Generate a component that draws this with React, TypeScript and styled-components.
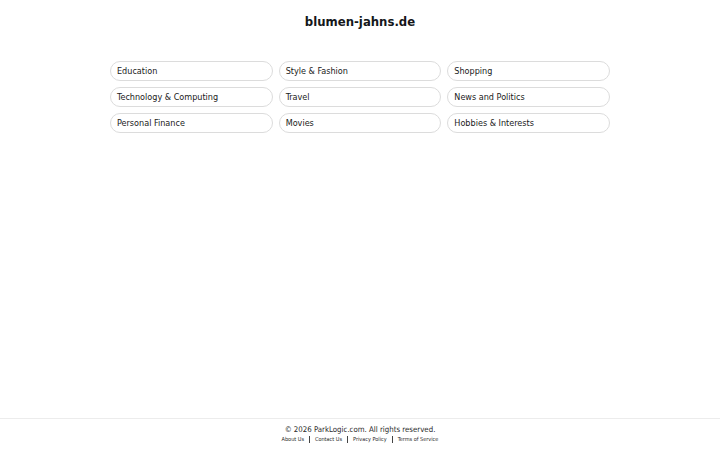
import React from 'react';
import styled, { createGlobalStyle } from 'styled-components';

const GlobalStyle = createGlobalStyle`
  html, body {
    margin: 0;
    padding: 0;
    background: #fff;
    font-family: "DejaVu Sans Condensed", "DejaVu Sans", sans-serif;
    color: #1f2328;
  }
`;

const Page = styled.div`
  height: 450px;
  display: flex;
  flex-direction: column;
`;

const Main = styled.main`
  flex: 1;
  display: flex;
  flex-direction: column;
  align-items: center;
`;

const Title = styled.h1`
  margin: 14px 0 0;
  font-size: 13px;
  line-height: 16px;
  font-weight: bold;
  color: #15171a;
`;

const Grid = styled.ul`
  list-style: none;
  margin: 31px 0 0;
  padding: 0;
  width: 500px;
  display: grid;
  grid-template-columns: repeat(3, 1fr);
  gap: 6px 6px;
`;

const Pill = styled.li`
  height: 18px;
  border: 1px solid #dcdcdc;
  border-radius: 10px;
  display: flex;
  align-items: center;
  padding: 0 6px;
  font-size: 9px;
  color: #1a1a1a;
`;

const Footer = styled.footer`
  height: 32px;
  border-top: 1px solid #ececec;
  padding-top: 6px;
  box-sizing: border-box;
  display: flex;
  flex-direction: column;
  align-items: center;
`;

const Copy = styled.div`
  font-size: 7.8px;
  line-height: 10px;
  color: #2a2a2a;
`;

const Links = styled.nav`
  display: flex;
  align-items: center;
  gap: 5px;
  font-size: 5.5px;
  line-height: 8px;
  color: #2a2a2a;
`;

const Sep = styled.span`
  width: 1px;
  height: 7px;
  background: #444;
`;

const categories = [
  'Education',
  'Style & Fashion',
  'Shopping',
  'Technology & Computing',
  'Travel',
  'News and Politics',
  'Personal Finance',
  'Movies',
  'Hobbies & Interests',
];

const links = ['About Us', 'Contact Us', 'Privacy Policy', 'Terms of Service'];

export default function App() {
  return (
    <Page>
      <GlobalStyle />
      <Main>
        <Title>blumen-jahns.de</Title>
        <Grid>
          {categories.map((c) => (
            <Pill key={c}>{c}</Pill>
          ))}
        </Grid>
      </Main>
      <Footer>
        <Copy>© 2026 ParkLogic.com. All rights reserved.</Copy>
        <Links>
          {links.map((l, i) => (
            <React.Fragment key={l}>
              {i > 0 && <Sep />}
              <span>{l}</span>
            </React.Fragment>
          ))}
        </Links>
      </Footer>
    </Page>
  );
}
